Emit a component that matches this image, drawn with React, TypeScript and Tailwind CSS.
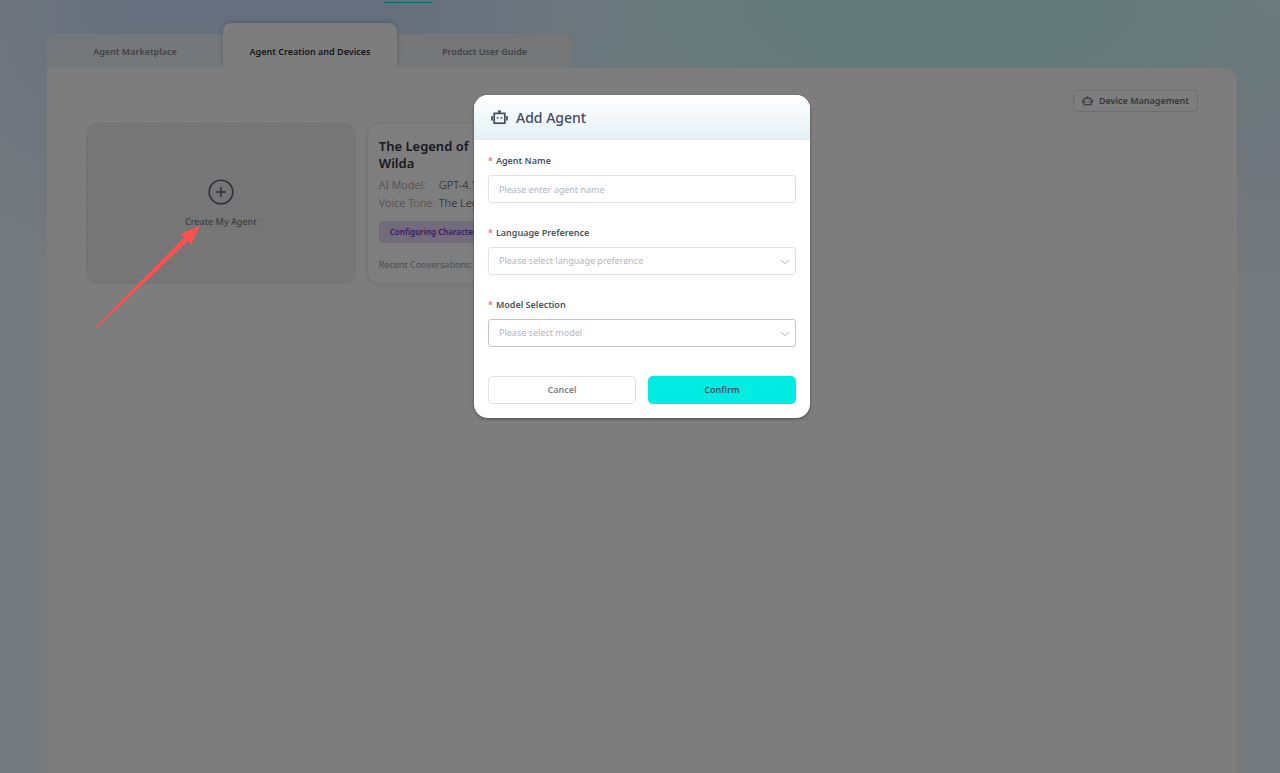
import { ChevronDown } from "lucide-react";

function RobotIcon({ className }: { className?: string }) {
  return (
    <svg
      viewBox="0 0 17 15"
      className={className}
      fill="none"
      stroke="currentColor"
      strokeWidth="1.7"
      aria-hidden="true"
    >
      <rect x="3.2" y="3.4" width="10.6" height="9.8" />
      <path d="M1 6v4.4M16 6v4.4" />
      <path d="M6.6 0.4h3.8L9.2 3.4H7.8z" fill="currentColor" stroke="none" />
      <circle cx="6.6" cy="7.9" r="0.9" fill="currentColor" stroke="none" />
      <circle cx="10.4" cy="7.9" r="0.9" fill="currentColor" stroke="none" />
    </svg>
  );
}

function FieldLabel({ id, text }: { id: string; text: string }) {
  return (
    <label
      htmlFor={id}
      className="mb-1 flex h-5 items-center gap-[3px] text-[9px] font-semibold text-[#4c5364]"
    >
      <span className="text-[#f56c6c]">*</span>
      {text}
    </label>
  );
}

function SelectField({
  id,
  label,
  placeholder,
  active,
}: {
  id: string;
  label: string;
  placeholder: string;
  active?: boolean;
}) {
  return (
    <div>
      <FieldLabel id={id} text={label} />
      <div className="relative">
        <select
          id={id}
          defaultValue=""
          className={`block h-7 w-full appearance-none rounded-[3px] border bg-white px-[10px] text-[9px] text-[#b2b6c0] outline-none ${
            active ? "border-[#c0c4cc]" : "border-[#dfe1ea]"
          }`}
        >
          <option value="">{placeholder}</option>
        </select>
        <ChevronDown
          className="pointer-events-none absolute top-2 right-1 size-3.5 text-[#a8abb2]"
          strokeWidth={1.6}
        />
      </div>
    </div>
  );
}

function AgentTabs() {
  return (
    <nav className="flex items-end text-[9px] font-semibold text-[#83858c]">
      <button className="h-[34px] w-[176px] rounded-tl-lg bg-[#e9f1f5] pt-0.5">
        Agent Marketplace
      </button>
      <button className="z-10 h-[45px] w-[174px] rounded-t-lg bg-[#fafafc] pt-3 text-[#2c2f38] shadow-[0_-1px_5px_rgba(0,0,0,0.2)] [clip-path:inset(-8px_-8px_0_-8px)]">
        Agent Creation and Devices
      </button>
      <button className="h-[34px] w-[175px] rounded-tr-lg bg-[#eceff3] pt-0.5">
        Product User Guide
      </button>
    </nav>
  );
}

function AgentCard() {
  return (
    <article className="h-[161px] rounded-xl border border-[#ececf0] bg-[#fcfcfc] px-[11px] pt-3.5 shadow-[0_1px_4px_rgba(0,0,0,0.1)]">
      <h2 className="text-[13px] leading-[17px] font-semibold text-[#30323c]">
        The Legend of
        <br />
        Wilda
      </h2>
      <dl className="mt-1 grid grid-cols-[60px_1fr] text-[11px] leading-[18px] font-light">
        <dt className="whitespace-nowrap text-[#8c8d92]">AI Model:</dt>
        <dd className="text-[#3c3e46]">GPT-4.1</dd>
        <dt className="whitespace-nowrap text-[#8c8d92]">Voice Tone:</dt>
        <dd className="text-[#3c3e46]">The Legend</dd>
      </dl>
      <button className="mt-[9px] h-[22px] rounded-[4px] bg-[#e2d6f5] px-[11px] text-[8px] font-semibold text-[#7436c4]">
        Configuring Character
      </button>
      <p className="mt-3 text-[9px] leading-5 text-[#9a9ba0]">
        Recent Conversations:
      </p>
    </article>
  );
}

function AddAgentDialog() {
  return (
    <div
      role="dialog"
      aria-labelledby="add-agent-title"
      className="w-[336px] overflow-hidden rounded-[14px] bg-white shadow-[0_1px_3px_rgba(0,0,0,0.4)]"
    >
      <header className="flex h-11 items-center gap-2 bg-linear-to-b from-white to-[#e4f1f7] px-[17px] text-[#454c5e]">
        <RobotIcon className="h-[15px] w-[17px]" />
        <h1 id="add-agent-title" className="text-[14px] font-medium">
          Add Agent
        </h1>
      </header>
      <form className="border-t border-[#dfecf1] px-3.5 pt-[11px] pb-3.5">
        <div className="flex flex-col gap-5">
          <div>
            <FieldLabel id="agent-name" text="Agent Name" />
            <input
              id="agent-name"
              type="text"
              placeholder="Please enter agent name"
              className="block h-7 w-full rounded-[3px] border border-[#dfe1ea] px-[10px] text-[9px] outline-none placeholder:text-[#b2b6c0]"
            />
          </div>
          <SelectField
            id="language"
            label="Language Preference"
            placeholder="Please select language preference"
          />
          <SelectField
            id="model"
            label="Model Selection"
            placeholder="Please select model"
            active
          />
        </div>
        <div className="mt-[29px] grid grid-cols-2 gap-3 text-[9px] font-semibold">
          <button
            type="button"
            className="h-7 rounded-[5px] border border-[#dfe1e6] text-[#7c808c]"
          >
            Cancel
          </button>
          <button
            type="submit"
            className="h-7 rounded-[5px] bg-[#00ebe1] text-[#3f5668]"
          >
            Confirm
          </button>
        </div>
      </form>
    </div>
  );
}

export default function App() {
  return (
    <div className="relative flex min-h-screen flex-col overflow-hidden bg-[#e8f4fa] bg-[radial-gradient(ellipse_420px_300px_at_260px_0px,#cfe0fc_30%,transparent),radial-gradient(ellipse_560px_260px_at_940px_0px,#c9f3f5_30%,transparent),radial-gradient(ellipse_160px_150px_at_1270px_150px,#e2e8fb,transparent)] font-['Noto_Sans',sans-serif]">
      <div className="h-[3px]">
        <div className="ml-[30%] h-[3px] w-12 border-b border-[#00d8c8]" />
      </div>
      <div className="mt-5 mr-[43px] ml-[47px] flex flex-1 flex-col">
        <AgentTabs />
        <main className="flex-1 rounded-tr-[14px] bg-[#fafafc] px-[39px] pt-[22px]">
          <div className="flex justify-end">
            <button className="flex h-[22px] items-center gap-1.5 rounded-[4px] border border-[#dcdcde] px-2 text-[9px] font-semibold text-[#6c6f77]">
              <RobotIcon className="h-[10px] w-[11px]" />
              Device Management
            </button>
          </div>
          <section className="mt-[11px] grid grid-cols-4 gap-[11px]">
            <button className="flex h-[161px] flex-col items-center justify-center gap-2.5 rounded-xl border border-dashed border-[#e0e0e3] bg-[#ededef] text-[9px] font-medium text-[#7a7c83]">
              <svg
                viewBox="0 0 26 26"
                className="size-[26px] text-[#5f6370]"
                fill="none"
                stroke="currentColor"
                strokeWidth="1.6"
              >
                <circle cx="13" cy="13" r="11.8" />
                <path d="M13 8v10M8 13h10" />
              </svg>
              Create My Agent
            </button>
            <AgentCard />
          </section>
        </main>
      </div>

      <div className="absolute inset-0 z-20 flex items-start justify-center bg-black/50 pt-[95px] pl-1">
        <AddAgentDialog />
      </div>

      {/* pointer to the create card */}
      <svg
        viewBox="0 0 106 104"
        className="absolute top-[225px] left-[95px] z-30 h-[104px] w-[106px]"
        fill="#ff5050"
        aria-hidden="true"
      >
        <path d="M104.7 0.7L85.3 9.3L89.3 12.3L0.3 102.2L1.2 103L93.3 16L96 20Z" />
      </svg>
    </div>
  );
}
